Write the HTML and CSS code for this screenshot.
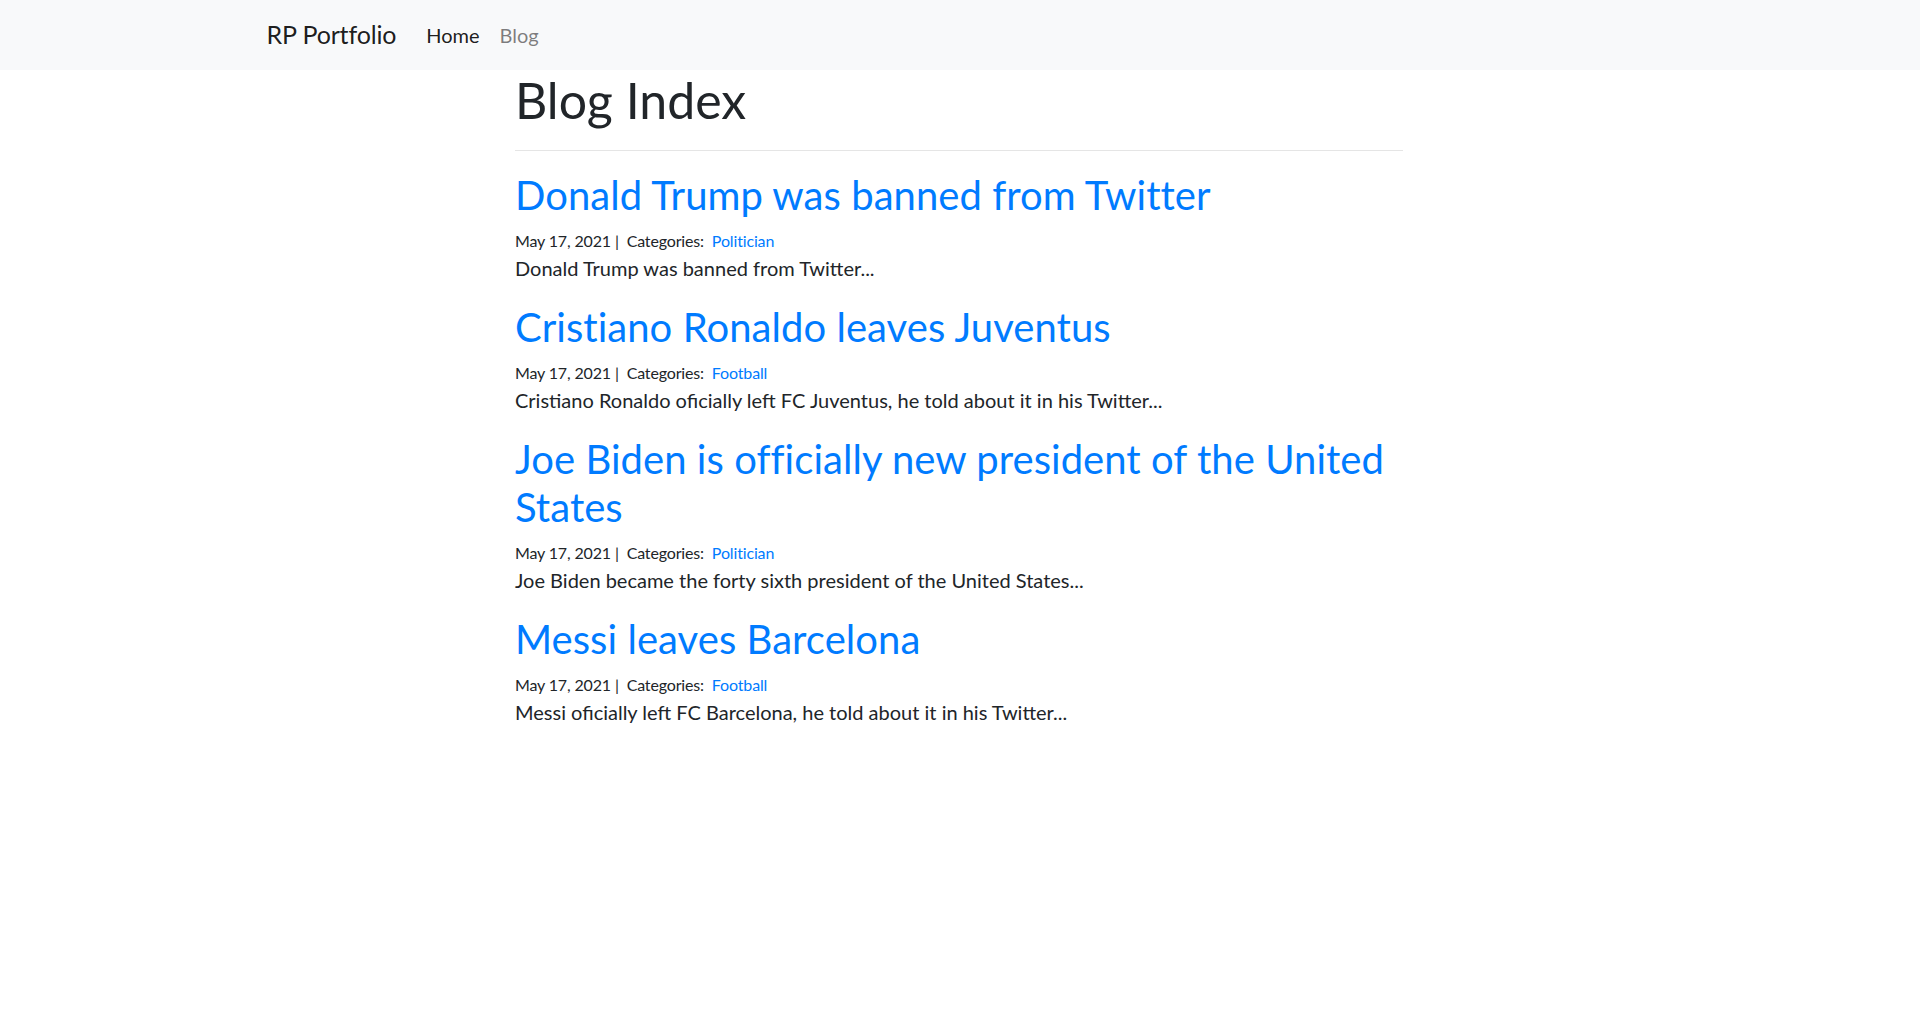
FILE: index.html
```html
<!DOCTYPE html>
<html lang="en">
<head>
<meta charset="utf-8">
<title>Blog Index</title>
<link rel="stylesheet" href="styles.css">
</head>
<body>
<nav class="navbar">
  <div class="nav-container">
    <a class="brand" href="#">RP Portfolio</a>
    <ul class="nav-links">
      <li><a class="nav-link active" href="#">Home</a></li>
      <li><a class="nav-link" href="#">Blog</a></li>
    </ul>
  </div>
</nav>
<main class="content">
  <h1 class="page-title">Blog Index</h1>
  <hr class="divider">
  <article class="post">
    <h2 class="post-title"><a href="#">Donald Trump was banned from Twitter</a></h2>
    <div class="post-meta">May 17, 2021 |&nbsp; Categories:&nbsp; <a href="#">Politician</a></div>
    <p class="post-excerpt">Donald Trump was banned from Twitter...</p>
  </article>
  <article class="post">
    <h2 class="post-title"><a href="#">Cristiano Ronaldo leaves Juventus</a></h2>
    <div class="post-meta">May 17, 2021 |&nbsp; Categories:&nbsp; <a href="#">Football</a></div>
    <p class="post-excerpt">Cristiano Ronaldo oficially left FC Juventus, he told about it in his Twitter...</p>
  </article>
  <article class="post">
    <h2 class="post-title"><a href="#">Joe Biden is officially new president of the United States</a></h2>
    <div class="post-meta">May 17, 2021 |&nbsp; Categories:&nbsp; <a href="#">Politician</a></div>
    <p class="post-excerpt">Joe Biden became the forty sixth president of the United States...</p>
  </article>
  <article class="post">
    <h2 class="post-title"><a href="#">Messi leaves Barcelona</a></h2>
    <div class="post-meta">May 17, 2021 |&nbsp; Categories:&nbsp; <a href="#">Football</a></div>
    <p class="post-excerpt">Messi oficially left FC Barcelona, he told about it in his Twitter...</p>
  </article>
</main>
</body>
</html>
```

FILE: styles.css
```css
* { box-sizing: border-box; }
html, body {
  margin: 0;
  padding: 0;
  background: #fff;
}
body {
  font-family: Lato, "Liberation Sans", sans-serif;
  font-size: 20px;
  line-height: 30px;
  color: #212529;
}
a { text-decoration: none; color: #007bff; }

.navbar {
  background: #f8f9fa;
  padding: 10px 0;
}
.nav-container {
  max-width: 1425px;
  margin: 0 auto;
  padding: 0 19px;
  display: flex;
  align-items: center;
}
.brand {
  font-size: 25px;
  line-height: 37.5px;
  padding: 6.25px 0;
  margin-right: 20px;
  color: rgba(0,0,0,.9);
  letter-spacing: -0.15px;
}
.nav-links {
  list-style: none;
  margin: 0;
  padding: 0;
  display: flex;
}
.nav-link {
  display: block;
  padding: 10px 10px;
  color: rgba(0,0,0,.5);
}
.nav-link.active { color: rgba(0,0,0,.9); }

.content {
  max-width: 890px;
  margin: 0 auto;
  padding-right: 2px;
}
.page-title {
  font-size: 50px;
  line-height: 60px;
  font-weight: 400;
  margin: 0 0 10px;
}
.divider {
  margin: 20px 0;
  border: 0;
  border-top: 1px solid rgba(0,0,0,.1);
}
.post-title {
  font-size: 40px;
  line-height: 48px;
  font-weight: 400;
  margin: 0 0 10px;
  letter-spacing: 0.05px;
}
.post-meta {
  font-size: 16px;
  line-height: 24px;
  letter-spacing: -0.15px;
}
.post-excerpt {
  margin: 0 0 20px;
}
```
